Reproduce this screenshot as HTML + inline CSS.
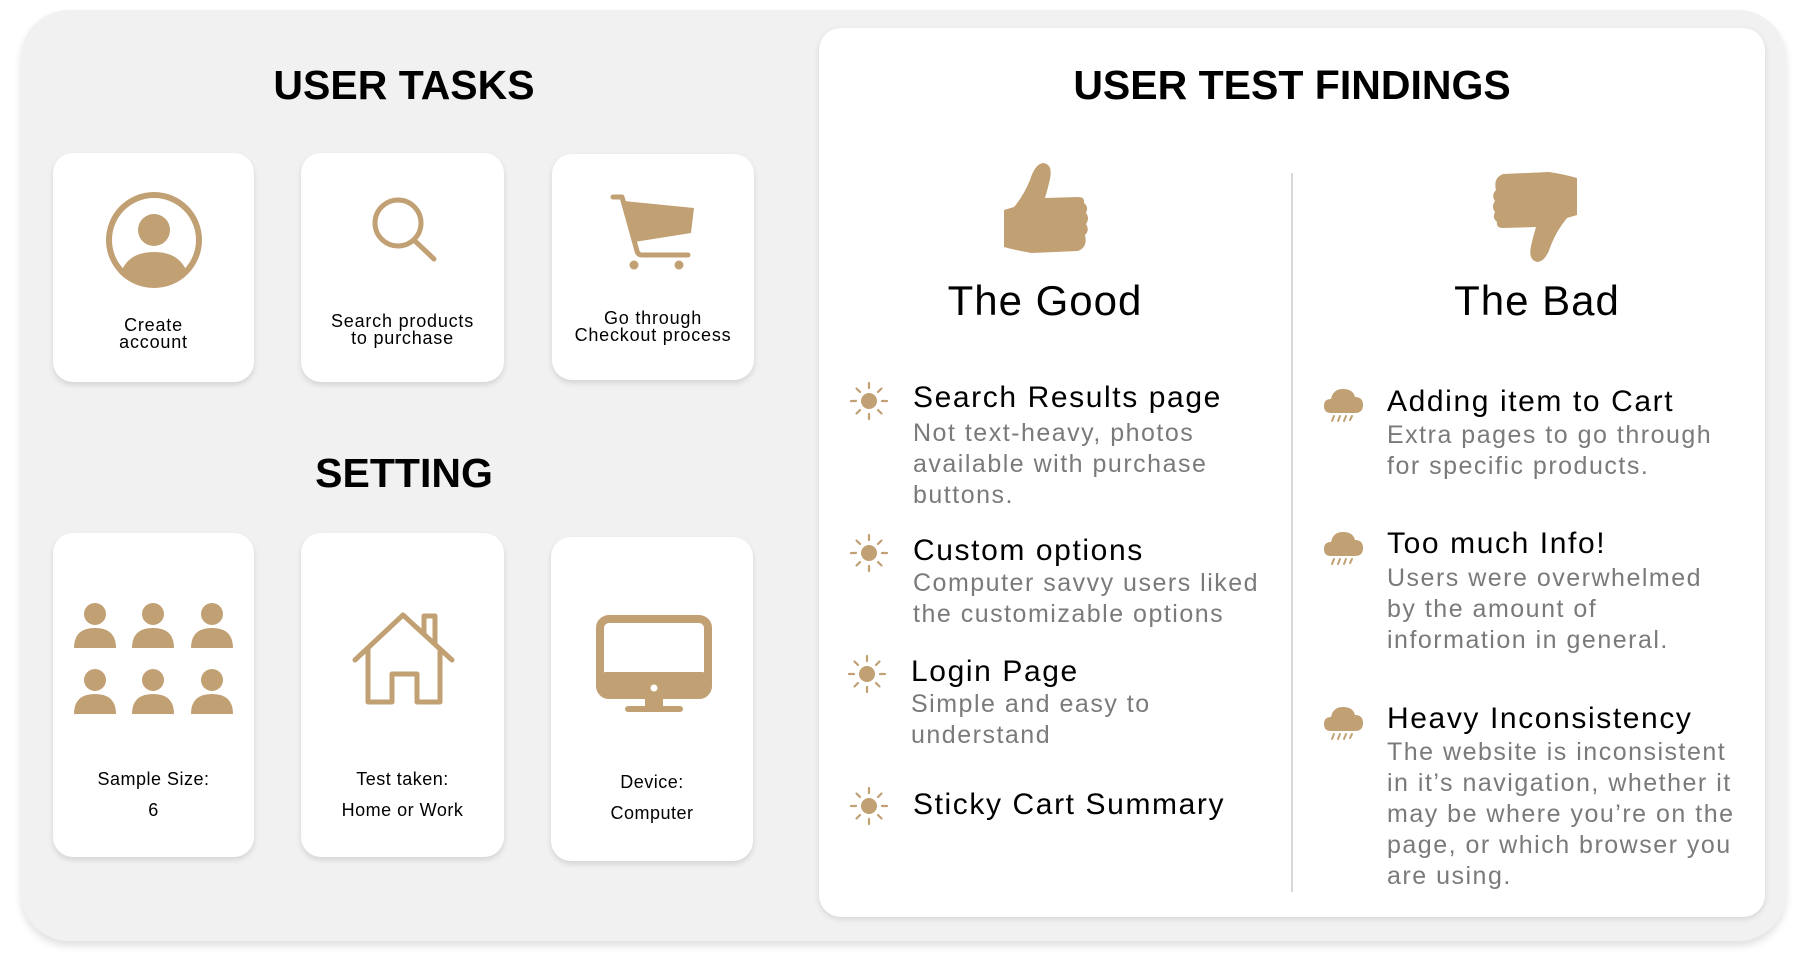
<!DOCTYPE html>
<html><head><meta charset="utf-8"><style>
*{margin:0;padding:0;box-sizing:border-box}
body{width:1804px;height:974px;background:#fff;position:relative;overflow:hidden;font-family:"Liberation Sans",sans-serif;color:#000}
.abs{position:absolute}
.outer{left:21px;top:10px;width:1765px;height:931px;background:#f1f1f1;border-radius:48px;box-shadow:0 5px 8px rgba(0,0,0,.12)}
.rp{left:819px;top:28px;width:946px;height:889px;background:#fff;border-radius:22px;box-shadow:0 2px 6px rgba(0,0,0,.12)}
.card{background:#fff;border-radius:20px;box-shadow:0 3px 6px rgba(0,0,0,.12)}
.h{font-weight:bold;font-size:41px;text-align:center;letter-spacing:0;line-height:50px}
.ct{text-align:center;font-size:18px;line-height:17px;letter-spacing:.8px}
.st{text-align:center;font-size:18px;line-height:31px;letter-spacing:.5px}
.big{font-size:42px;text-align:center;line-height:48px;letter-spacing:1px}
.it{font-size:30px;line-height:34px;letter-spacing:1.6px}
.ds{font-size:25px;line-height:31px;color:#7a7a7a;letter-spacing:1.5px}
</style></head><body>
<div class="abs outer"></div>
<div class="abs rp"></div>

<div class="abs h" style="left:154px;top:60px;width:500px">USER TASKS</div>
<div class="abs h" style="left:154px;top:448px;width:500px">SETTING</div>
<div class="abs h" style="left:942px;top:60px;width:700px">USER TEST FINDINGS</div>

<div class="abs card" style="left:53px;top:153px;width:201px;height:229px"></div>
<div class="abs card" style="left:301px;top:153px;width:203px;height:229px"></div>
<div class="abs card" style="left:552px;top:154px;width:202px;height:226px"></div>
<div class="abs card" style="left:53px;top:533px;width:201px;height:324px"></div>
<div class="abs card" style="left:301px;top:533px;width:203px;height:324px"></div>
<div class="abs card" style="left:551px;top:537px;width:202px;height:324px"></div>

<svg class="abs" style="left:0;top:0" width="1804" height="974">
<g fill="#c1a073" stroke="none">
 <circle cx="154" cy="240" r="45" fill="none" stroke="#c1a073" stroke-width="6"/>
 <circle cx="154" cy="230" r="16"/>
 <path d="M122 270 Q130 252 154 252 Q178 252 186 270 Q172 285 154 285 Q136 285 122 270Z"/>
 <circle cx="398" cy="223" r="23" fill="none" stroke="#c1a073" stroke-width="5"/>
 <line x1="414" y1="240" x2="434" y2="259" stroke="#c1a073" stroke-width="5" stroke-linecap="round"/>
 <g transform="translate(600,185)">
  <path d="M13 12 H22 L37 66 Q38 70 42 70 H88" fill="none" stroke="#c1a073" stroke-width="5" stroke-linecap="round" stroke-linejoin="round"/>
  <path d="M24 16 L94 23 L91 48 L34 57Z"/>
  <circle cx="34" cy="80" r="4.5"/><circle cx="79" cy="80" r="4.5"/>
 </g>
 <g>
  <circle cx="95" cy="614" r="11"/><circle cx="153" cy="614" r="11"/><circle cx="212" cy="614" r="11"/>
  <circle cx="95" cy="680" r="11"/><circle cx="153" cy="680" r="11"/><circle cx="212" cy="680" r="11"/>
  <path d="M74 648 Q74 628 95 628 Q116 628 116 648Z"/>
  <path d="M132 648 Q132 628 153 628 Q174 628 174 648Z"/>
  <path d="M191 648 Q191 628 212 628 Q233 628 233 648Z"/>
  <path d="M74 714 Q74 694 95 694 Q116 694 116 714Z"/>
  <path d="M132 714 Q132 694 153 694 Q174 694 174 714Z"/>
  <path d="M191 714 Q191 694 212 694 Q233 694 233 714Z"/>
 </g>
 <g transform="translate(340,600)" fill="none" stroke="#c1a073" stroke-width="5" stroke-linejoin="round" stroke-linecap="round">
  <path d="M15 60 L63 15 L112 60"/>
  <path d="M28 50 V102 H52 V74 H77 V102 H100 V50"/>
  <path d="M84 33 V16 H95 V44"/>
 </g>
 <rect x="600" y="619" width="108" height="76" rx="9" fill="none" stroke="#c1a073" stroke-width="8"/>
 <rect x="600" y="672" width="108" height="23" rx="6"/>
 <circle cx="654" cy="688" r="3.5" fill="#fff"/>
 <rect x="645" y="694" width="18" height="14"/>
 <rect x="625" y="706" width="58" height="6" rx="3"/>
 <g transform="translate(990,155)">
  <path d="M14 55 L24 52 Q34 40 40 25 Q45 9 53 8 Q63 9 60 24 Q58 33 55 43 L88 42 Q95 42 94 48 Q99 52 96 58 Q100 63 96 69 Q100 75 95 80 Q98 92 88 96 L42 98 Q28 96 14 92 Z"/>
 </g>
 <g transform="translate(1591,270) rotate(180)">
  <path d="M14 55 L24 52 Q34 40 40 25 Q45 9 53 8 Q63 9 60 24 Q58 33 55 43 L88 42 Q95 42 94 48 Q99 52 96 58 Q100 63 96 69 Q100 75 95 80 Q98 92 88 96 L42 98 Q28 96 14 92 Z"/>
 </g>
</g>
<line x1="1292" y1="173" x2="1292" y2="892" stroke="#d8d8d8" stroke-width="2"/>
<defs>
 <g id="sun"><circle r="8" fill="#c1a073"/>
  <g stroke="#c1a073" stroke-width="2.2" stroke-linecap="round">
   <line x1="0" y1="-13" x2="0" y2="-18"/><line x1="0" y1="13" x2="0" y2="18"/>
   <line x1="-13" y1="0" x2="-18" y2="0"/><line x1="13" y1="0" x2="18" y2="0"/>
   <line x1="9" y1="-9" x2="12.5" y2="-12.5"/><line x1="-9" y1="-9" x2="-12.5" y2="-12.5"/>
   <line x1="9" y1="9" x2="12.5" y2="12.5"/><line x1="-9" y1="9" x2="-12.5" y2="12.5"/>
  </g></g>
 <g id="cloud" fill="#c1a073">
  <path d="M-14 12 Q-21 12 -21 5 Q-21 -2 -14 -2 Q-12 -12 -2 -12 Q8 -12 10 -4 Q18 -4 18 4 Q18 12 10 12Z"/>
  <g stroke="#c1a073" stroke-width="2" stroke-linecap="round">
   <line x1="-11" y1="15" x2="-13" y2="20"/><line x1="-5" y1="15" x2="-7" y2="20"/><line x1="1" y1="15" x2="-1" y2="20"/><line x1="7" y1="15" x2="5" y2="19"/>
  </g></g>
</defs>
<use href="#sun" x="869" y="401"/>
<use href="#sun" x="869" y="553"/>
<use href="#sun" x="867" y="674"/>
<use href="#sun" x="869" y="806"/>
<use href="#cloud" x="1345" y="401"/>
<use href="#cloud" x="1345" y="544"/>
<use href="#cloud" x="1345" y="719"/>
</svg>

<div class="abs ct" style="left:53px;top:317px;width:201px">Create<br>account</div>
<div class="abs ct" style="left:301px;top:313px;width:203px">Search products<br>to purchase</div>
<div class="abs ct" style="left:552px;top:310px;width:202px">Go through<br>Checkout process</div>
<div class="abs st" style="left:53px;top:764px;width:201px">Sample Size:<br>6</div>
<div class="abs st" style="left:301px;top:764px;width:203px">Test taken:<br>Home or Work</div>
<div class="abs st" style="left:551px;top:767px;width:202px">Device:<br>Computer</div>

<div class="abs big" style="left:895px;top:277px;width:300px">The Good</div>
<div class="abs big" style="left:1387px;top:277px;width:300px">The Bad</div>

<div class="abs it" style="left:913px;top:381px">Search Results page</div>
<div class="abs ds" style="left:913px;top:418px">Not text-heavy, photos<br>available with purchase<br>buttons.</div>
<div class="abs it" style="left:913px;top:534px">Custom options</div>
<div class="abs ds" style="left:913px;top:568px">Computer savvy users liked<br>the customizable options</div>
<div class="abs it" style="left:911px;top:655px">Login Page</div>
<div class="abs ds" style="left:911px;top:689px">Simple and easy to<br>understand</div>
<div class="abs it" style="left:913px;top:788px">Sticky Cart Summary</div>

<div class="abs it" style="left:1387px;top:385px">Adding item to Cart</div>
<div class="abs ds" style="left:1387px;top:420px">Extra pages to go through<br>for specific products.</div>
<div class="abs it" style="left:1387px;top:527px">Too much Info!</div>
<div class="abs ds" style="left:1387px;top:563px">Users were overwhelmed<br>by the amount of<br>information in general.</div>
<div class="abs it" style="left:1387px;top:702px">Heavy Inconsistency</div>
<div class="abs ds" style="left:1387px;top:737px">The website is inconsistent<br>in it’s navigation, whether it<br>may be where you’re on the<br>page, or which browser you<br>are using.</div>
</body></html>
